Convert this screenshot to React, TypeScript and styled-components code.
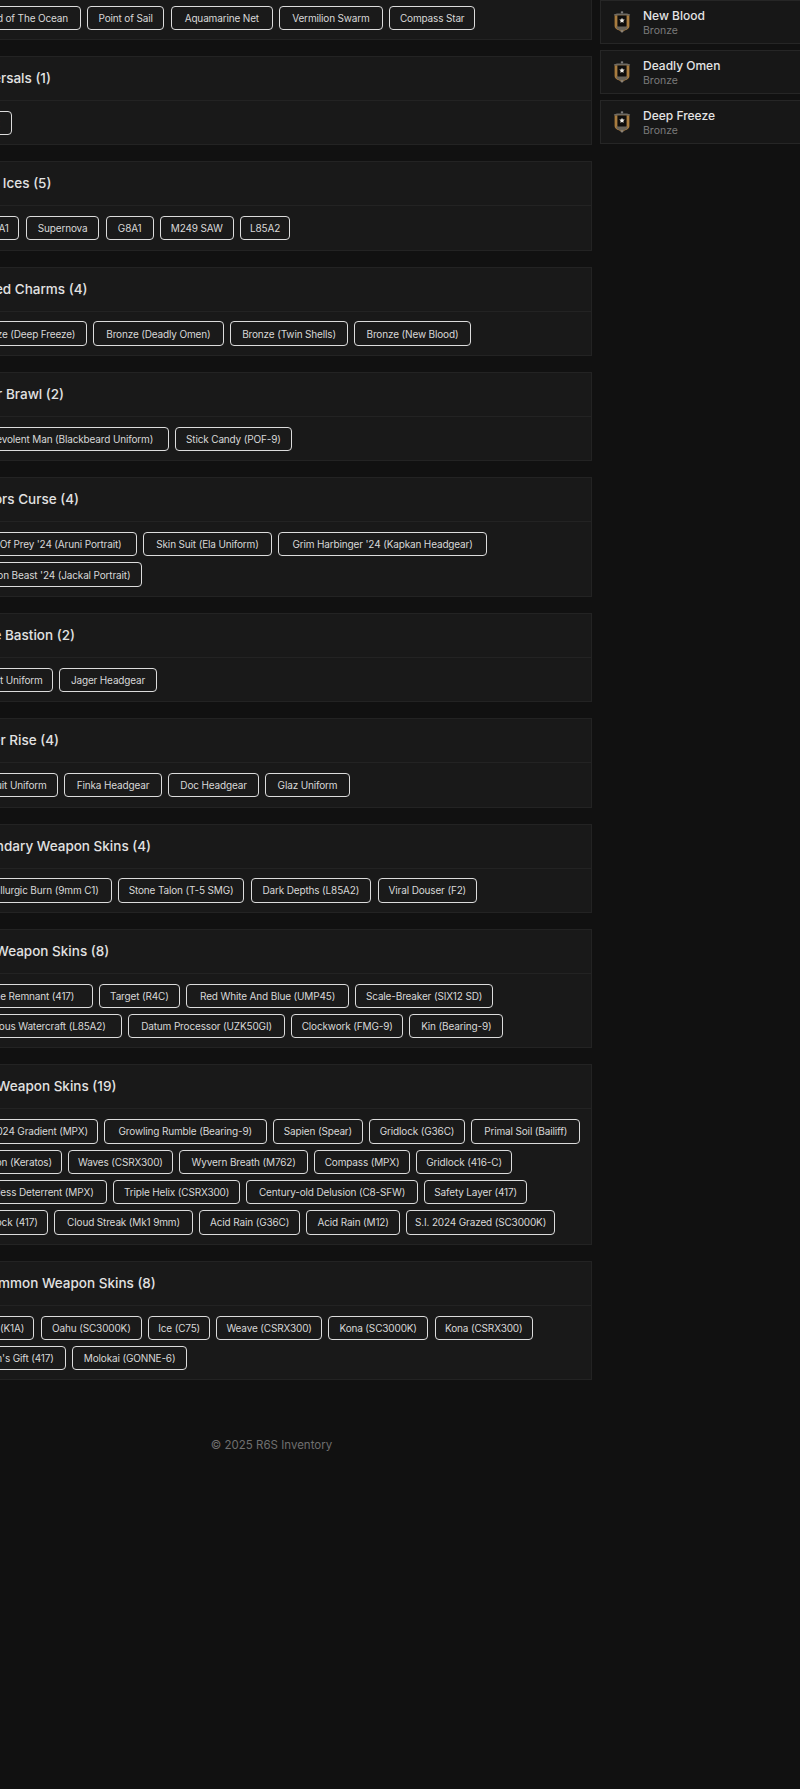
import styled, {createGlobalStyle} from "styled-components";

const CONTENT_LEFT = -36;
const CHIP_GAP = 6.4;

type Chip = [string, number];

interface Section {
    title: string,
    rows: Chip[][]
}

// second value of a chip is where its right edge lands on the page
const sections: Section[] = [
    {title: "Seasonal Charms (5)", rows: [[["Blood of The Ocean", 80.6], ["Point of Sail", 164.3], ["Aquamarine Net", 273], ["Vermilion Swarm", 382.6], ["Compass Star", 475.5]]]},
    {title: "Universals (1)", rows: [[["Sight", 12]]]},
    {title: "Black Ices (5)", rows: [[["AUG A1", 19.4], ["Supernova", 99.5], ["G8A1", 153.6], ["M249 SAW", 233.7], ["L85A2", 290.3]]]},
    {title: "Limited Charms (4)", rows: [[["Bronze (Deep Freeze)", 86.5], ["Bronze (Deadly Omen)", 223.9], ["Bronze (Twin Shells)", 347.9], ["Bronze (New Blood)", 470.7]]]},
    {title: "Super Brawl (2)", rows: [[["Malevolent Man (Blackbeard Uniform)", 168.8], ["Stick Candy (POF-9)", 291.6]]]},
    {title: "Doktors Curse (4)", rows: [
        [["Bird Of Prey '24 (Aruni Portrait)", 136.6], ["Skin Suit (Ela Uniform)", 272], ["Grim Harbinger '24 (Kapkan Headgear)", 486.8]],
        [["Demon Beast '24 (Jackal Portrait)", 142.4]]
    ]},
    {title: "Stone Bastion (2)", rows: [[["Bandit Uniform", 52.8], ["Jager Headgear", 156.9]]]},
    {title: "Ember Rise (4)", rows: [[["Recruit Uniform", 57.8], ["Finka Headgear", 161.9], ["Doc Headgear", 259], ["Glaz Uniform", 349.8]]]},
    {title: "Legendary Weapon Skins (4)", rows: [[["Metallurgic Burn (9mm C1)", 111.7], ["Stone Talon (T-5 SMG)", 244.2], ["Dark Depths (L85A2)", 371.2], ["Viral Douser (F2)", 477.2]]]},
    {title: "Epic Weapon Skins (8)", rows: [
        [["Bone Remnant (417)", 92.6], ["Target (R4C)", 179.9], ["Red White And Blue (UMP45)", 349], ["Scale-Breaker (SIX12 SD)", 492.9]],
        [["Curious Watercraft (L85A2)", 121.7], ["Datum Processor (UZK50GI)", 285.1], ["Clockwork (FMG-9)", 403], ["Kin (Bearing-9)", 503.3]]
    ]},
    {title: "Rare Weapon Skins (19)", rows: [
        [["S.I. 2024 Gradient (MPX)", 97.6], ["Growling Rumble (Bearing-9)", 266.7], ["Sapien (Spear)", 362.8], ["Gridlock (G36C)", 465], ["Primal Soil (Bailiff)", 580.2]],
        [["Dragon (Keratos)", 61.6], ["Waves (CSRX300)", 173], ["Wyvern Breath (M762)", 308], ["Compass (MPX)", 409.9], ["Gridlock (416-C)", 512]],
        [["Ruthless Deterrent (MPX)", 106.8], ["Triple Helix (CSRX300)", 240], ["Century-old Delusion (C8-SFW)", 417.9], ["Safety Layer (417)", 527]],
        [["Gridlock (417)", 47.8], ["Cloud Streak (Mk1 9mm)", 192.9], ["Acid Rain (G36C)", 300], ["Acid Rain (M12)", 400], ["S.I. 2024 Grazed (SC3000K)", 554.9]]
    ]},
    {title: "Uncommon Weapon Skins (8)", rows: [
        [["Kona (K1A)", 34.4], ["Oahu (SC3000K)", 142], ["Ice (C75)", 210], ["Weave (CSRX300)", 321.9], ["Kona (SC3000K)", 428.2], ["Kona (CSRX300)", 533.1]],
        [["Jotun's Gift (417)", 65.8], ["Molokai (GONNE-6)", 187.1]]
    ]}
];

const charms = ["New Blood", "Deadly Omen", "Deep Freeze"];

const BronzeBadge = () => (
    <BadgeSvg viewBox="0 0 18 22" aria-hidden="true">
        <path d="M9 0.3v2.4M7.8 1.2h2.4" stroke="#9a9a9a" strokeWidth="0.9" fill="none"/>
        <path d="M0.8 3.4L4 2.6h10l3.2.8-.8 1.4H1.6z" fill="#6f6b63"/>
        <path d="M1.6 4.6h14.8v10.2c0 1.8-.9 3-2.4 3.7L9 20.8l-5-2.3c-1.5-.7-2.4-1.9-2.4-3.7z" fill="#a97c3e"/>
        <path d="M4.4 4.6h9.2v10.2c0 1-.5 1.7-1.4 2.2L9 18.4l-3.2-1.4c-.9-.5-1.4-1.2-1.4-2.2z" fill="#0e0d0c"/>
        <path d="M9 6.7l.8 1.7 1.9.2-1.4 1.3.4 1.9-1.7-.9-1.7.9.4-1.9-1.4-1.3 1.9-.2z" fill="#f4f1ea"/>
        <path d="M3 15.6h12l-1.2 2.4L9 20.2 4.2 18z" fill="#6a655c"/>
        <circle cx="9" cy="20.3" r="1.3" fill="#8c8173"/>
    </BadgeSvg>
);

const ChipRows = ({rows}: {rows: Chip[][]}) => (
    <SectionBody>
        {rows.map((row) => (
            <ChipRow key={row[0][0]}>
                {row.map(([label, right], i) => {
                    const left = i === 0 ? CONTENT_LEFT : row[i - 1][1] + CHIP_GAP;
                    return <ItemChip key={label} $width={right - left}>{label}</ItemChip>;
                })}
            </ChipRow>
        ))}
    </SectionBody>
);

export default function App() {
    return (
        <>
            <GlobalStyle/>
            <Page>
                <MainColumn>
                    <SectionList>
                        {sections.map((section) => (
                            <SectionCard key={section.title}>
                                <SectionHeader>{section.title}</SectionHeader>
                                <ChipRows rows={section.rows}/>
                            </SectionCard>
                        ))}
                    </SectionList>
                    <Footer>© 2025 R6S Inventory</Footer>
                </MainColumn>
                <Sidebar>
                    {charms.map((charm) => (
                        <CharmCard key={charm}>
                            <BronzeBadge/>
                            <CharmText>
                                <CharmName>{charm}</CharmName>
                                <CharmTier>Bronze</CharmTier>
                            </CharmText>
                        </CharmCard>
                    ))}
                </Sidebar>
            </Page>
        </>
    );
}

const GlobalStyle = createGlobalStyle`
  html, body {
    margin: 0;
    padding: 0;
    background: #111111;
    width: 800px;
    height: 1789px;
    overflow: hidden;
  }

  body {
    font-family: Inter, "Noto Sans", sans-serif;
  }
`;

// the shot was taken scrolled, so the page starts above and left of the window
const Page = styled.div`
  display: flex;
  align-items: flex-start;
  gap: 8px;
  width: 1000px;
  margin: -49.33px 0 0 -52px;
`;

const MainColumn = styled.main`
  flex: none;
  width: 644px;
`;

const SectionList = styled.div`
  display: flex;
  flex-direction: column;
  gap: 16px;
`;

const SectionCard = styled.section`
  background: #191919;
  border: 1px solid #232323;
`;

const SectionHeader = styled.h3`
  margin: 0;
  padding: 12px 15px;
  height: 19px;
  box-sizing: content-box;
  border-bottom: 1px solid #232323;
  color: #e2e2e2;
  font-size: 13.5px;
  font-weight: 500;
  line-height: 19px;
  white-space: nowrap;
`;

const SectionBody = styled.div`
  display: flex;
  flex-direction: column;
  gap: 6px;
  padding: 9.83px 15px 9.17px;
`;

const ChipRow = styled.div`
  display: flex;
  gap: ${CHIP_GAP}px;
`;

const ItemChip = styled.span<{$width: number}>`
  flex: none;
  box-sizing: border-box;
  display: flex;
  align-items: center;
  justify-content: center;
  width: ${(props) => props.$width}px;
  height: 24.33px;
  border: 1px solid #dcdcdc;
  border-radius: 4px;
  background: #1a1a1a;
  color: #d8d8d8;
  font-size: 10px;
  letter-spacing: -0.15px;
  white-space: nowrap;
`;

const Footer = styled.footer`
  margin-top: 56.5px;
  padding-left: 3px;
  text-align: center;
  color: #6f6f6f;
  font-size: 11.5px;
  line-height: 16px;
`;

const Sidebar = styled.aside`
  flex: none;
  display: flex;
  flex-direction: column;
  gap: 6.33px;
  width: 300px;
  padding-top: 49.33px;
`;

const CharmCard = styled.div`
  box-sizing: border-box;
  display: flex;
  align-items: center;
  gap: 12px;
  height: 43.67px;
  padding: 0 12px;
  background: #171717;
  border: 1px solid #262626;
`;

const BadgeSvg = styled.svg`
  flex: none;
  width: 18px;
  height: 22px;
`;

const CharmText = styled.div`
  display: flex;
  flex-direction: column;
  padding-top: 1px;
`;

const CharmName = styled.span`
  color: #e4e4e4;
  font-size: 12px;
  font-weight: 500;
  line-height: 15px;
`;

const CharmTier = styled.span`
  margin-top: 1px;
  color: #7b7b7b;
  font-size: 10.5px;
  line-height: 13px;
`;
